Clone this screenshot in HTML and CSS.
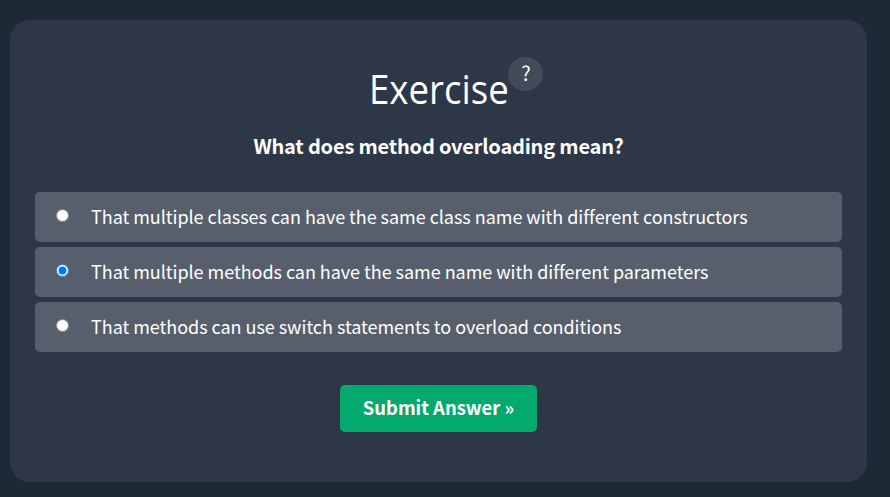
FILE: index.html
```html
<!DOCTYPE html>
<html lang="en">
<head>
<meta charset="utf-8">
<title>Exercise</title>
<link rel="stylesheet" href="styles.css">
</head>
<body>
<main class="card">
  <h2 class="title"><span class="title-text">Exercise</span><span class="help">?</span></h2>
  <p class="question">What does method overloading mean?</p>
  <form class="form">
    <label class="option"><input type="radio" name="answer"><span>That multiple classes can have the same class name with different constructors</span></label>
    <label class="option"><input type="radio" name="answer" checked><span>That multiple methods can have the same name with different parameters</span></label>
    <label class="option"><input type="radio" name="answer"><span>That methods can use switch statements to overload conditions</span></label>
    <button class="submit" type="button">Submit Answer »</button>
  </form>
</main>
</body>
</html>
```

FILE: styles.css
```css
* { box-sizing: border-box; }
body {
  margin: 0;
  padding: 20px 23px 15px 10px;
  height: 497px;
  overflow: hidden;
  background: #1d2a35;
  color: #fff;
  font-family: "Source Sans Pro", "Noto Sans CJK SC", sans-serif;
}
.card {
  height: 462px;
  padding: 37px 25px 0;
  border-radius: 20px;
  background: #2d3748;
}
.title {
  display: flex;
  justify-content: center;
  height: 64px;
  margin: 0 0 0 36px;
  font: 400 40px/64px "Segoe UI", "Open Sans", sans-serif;
}
.title-text {
  margin-left: -14px;
  transform: scaleX(.915);
  transform-origin: right;
}
.help {
  width: 35px;
  height: 34px;
  border-radius: 50%;
  background: #424b5a;
  font: 400 20px/32px "Noto Sans CJK SC", sans-serif;
  text-align: center;
}
.question {
  margin: 9px 0 30px;
  font-size: 20px;
  font-weight: 700;
  line-height: 32px;
  letter-spacing: -.19px;
  text-align: center;
}
.form {
  display: flex;
  flex-direction: column;
  gap: 5px;
}
.option {
  display: flex;
  align-items: center;
  height: 50px;
  padding-left: 21px;
  border-radius: 5px;
  background: #575f6d;
  font-size: 18px;
  letter-spacing: -.04px;
  white-space: nowrap;
}
.option input {
  width: 13px;
  height: 13px;
  margin: 0 22px 3px 0;
  accent-color: #0075ff;
}
.option span {
  padding-bottom: 3px;
}
.submit {
  align-self: center;
  width: 197px;
  height: 47px;
  margin-top: 28px;
  padding: 0 0 2px;
  border: 0;
  border-radius: 5px;
  background: #04aa6d;
  color: #fff;
  font: 700 18.4px/45px "Noto Sans CJK SC", sans-serif;
}
```
